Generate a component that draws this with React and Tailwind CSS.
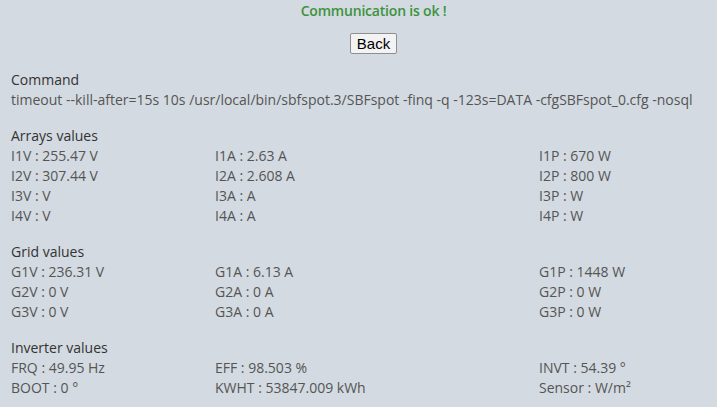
import React from 'react';

const sections = [
  {
    title: 'Arrays values',
    rows: [
      ['I1V : 255.47 V', 'I1A : 2.63 A', 'I1P : 670 W'],
      ['I2V : 307.44 V', 'I2A : 2.608 A', 'I2P : 800 W'],
      ['I3V : V', 'I3A : A', 'I3P : W'],
      ['I4V : V', 'I4A : A', 'I4P : W'],
    ],
  },
  {
    title: 'Grid values',
    rows: [
      ['G1V : 236.31 V', 'G1A : 6.13 A', 'G1P : 1448 W'],
      ['G2V : 0 V', 'G2A : 0 A', 'G2P : 0 W'],
      ['G3V : 0 V', 'G3A : 0 A', 'G3P : 0 W'],
    ],
  },
  {
    title: 'Inverter values',
    rows: [
      ['FRQ : 49.95 Hz', 'EFF : 98.503 %', 'INVT : 54.39 °'],
      ['BOOT : 0 °', 'KWHT : 53847.009 kWh', 'Sensor : W/m²'],
    ],
  },
];

const App = () => {
  return (
    <div className="bg-[#d3dae1] min-h-screen w-full overflow-hidden font-['Open_Sans',sans-serif] text-[14px] leading-[20px] text-[#555]">
      {/* Status */}
      <div className="pl-[30px] text-center">
        <p className="font-semibold text-[#3d923d] pt-px tracking-[-0.2px]">Communication is ok !</p>
        <button className="mt-[12px] h-[21px] px-[6px] bg-[#f3f3f3] border border-[#8f8f8f] rounded-[2px] text-[15px] leading-[17px] text-black font-['Liberation_Sans',sans-serif]">
          Back
        </button>
      </div>

      {/* Command */}
      <div className="px-[11px] mt-[16px]">
        <p className="text-[#333]">Command</p>
        <p className="whitespace-nowrap">timeout --kill-after=15s 10s /usr/local/bin/sbfspot.3/SBFspot -finq -q -123s=DATA -cfgSBFspot_0.cfg -nosql</p>
      </div>

      {sections.map((s) => (
        <div key={s.title} className="px-[11px] mt-[16px]">
          <p className="text-[#333]">{s.title}</p>
          {s.rows.map((r, i) => (
            <div key={i} className="grid grid-cols-[204px_324px_1fr]">
              {r.map((c, j) => (
                <span key={j} className="whitespace-nowrap">{c}</span>
              ))}
            </div>
          ))}
        </div>
      ))}
    </div>
  );
};

export default App;
